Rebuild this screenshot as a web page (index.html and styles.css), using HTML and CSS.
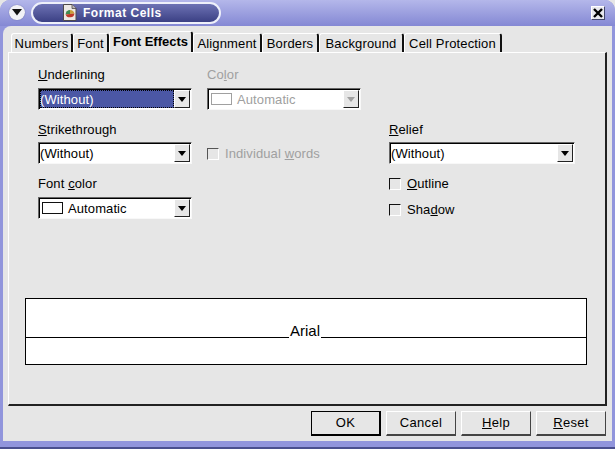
FILE: index.html
```html
<!DOCTYPE html>
<html lang="en">
<head>
    <meta charset="UTF-8">
    <title>Format Cells</title>
    <link rel="stylesheet" href="styles.css">
</head>
<body>
    <div class="window">
        <div class="titlebar">
            <div class="menu-btn">
                <svg width="10" height="7" viewBox="0 0 10 7"><path d="M0 0H10L5 6.5Z" fill="#111"/></svg>
            </div>
            <div class="title-pill">
                <svg class="doc-icon" width="15" height="17" viewBox="0 0 15 17">
                    <path d="M1.5 0.5H10L14 4.5V16.5H1.5Z" fill="#ece8e4" stroke="#4e4a4a"/>
                    <path d="M10 0.5V4.5H14" fill="#bdb8b4" stroke="#4e4a4a" stroke-width="0.8"/>
                    <path d="M8 10L8 6A4.5 4.5 0 0 0 3.6 10.5Z" fill="#3f8a4e"/>
                    <path d="M8 10L8 6A4.5 4.5 0 0 1 12.4 9.5Z" fill="#c9a03a"/>
                    <path d="M8 10L12.4 9.5A4.5 4 0 0 1 3.6 10.5Z" fill="#bf3a2a"/>
                </svg>
                <span>Format Cells</span>
            </div>
            <div class="close-btn">
                <svg width="10" height="10" viewBox="0 0 10 10"><path d="M1 1L9 9M9 1L1 9" stroke="#000" stroke-width="2.4"/></svg>
            </div>
        </div>
        <div class="client">
            <div class="tabs">
                <div class="tab tab-numbers">Numbers</div>
                <div class="tab tab-font">Font</div>
                <div class="tab tab-active">Font Effects</div>
                <div class="tab tab-alignment">Alignment</div>
                <div class="tab tab-borders">Borders</div>
                <div class="tab tab-background">Background</div>
                <div class="tab tab-protection">Cell Protection</div>
            </div>
            <div class="page">
                <div class="form-grid">
                    <div class="field">
                        <label class="lbl"><u>U</u>nderlining</label>
                        <div class="combo">
                            <div class="combo-text selected">(Without)</div>
                            <div class="arrow"><i></i></div>
                        </div>
                    </div>
                    <div class="field disabled">
                        <label class="lbl">Co<u>l</u>or</label>
                        <div class="combo">
                            <div class="combo-text"><span class="swatch"></span>Automatic</div>
                            <div class="arrow"><i></i></div>
                        </div>
                    </div>
                    <div></div>

                    <div class="field">
                        <label class="lbl lbl-tight"><u>S</u>trikethrough</label>
                        <div class="combo">
                            <div class="combo-text">(Without)</div>
                            <div class="arrow"><i></i></div>
                        </div>
                    </div>
                    <div class="field disabled check-cell">
                        <div class="check"><span class="box"></span><span>Individual <u>w</u>ords</span></div>
                    </div>
                    <div class="field">
                        <label class="lbl lbl-tight"><u>R</u>elief</label>
                        <div class="combo">
                            <div class="combo-text">(Without)</div>
                            <div class="arrow"><i></i></div>
                        </div>
                    </div>

                    <div class="field">
                        <label class="lbl">Font <u>c</u>olor</label>
                        <div class="combo">
                            <div class="combo-text"><span class="swatch"></span>Automatic</div>
                            <div class="arrow"><i></i></div>
                        </div>
                    </div>
                    <div></div>
                    <div class="checks">
                        <div class="check"><span class="box"></span><span><u>O</u>utline</span></div>
                        <div class="check"><span class="box"></span><span>Sha<u>d</u>ow</span></div>
                    </div>
                </div>
                <div class="preview">
                    <div class="preview-line"></div>
                    <span class="preview-text">Arial</span>
                </div>
            </div>
            <div class="buttons">
                <div class="btn btn-default">OK</div>
                <div class="btn">Cancel</div>
                <div class="btn"><span><u>H</u>elp</span></div>
                <div class="btn"><span><u>R</u>eset</span></div>
            </div>
        </div>
    </div>
</body>
</html>
```

FILE: styles.css
```css
html, body { margin: 0; padding: 0; }
body {
    width: 615px;
    height: 449px;
    overflow: hidden;
    font-family: "Liberation Sans", Arial, sans-serif;
    font-size: 13px;
    letter-spacing: 0.1px;
    color: #000;
    background: #e6e6e6;
}

.window {
    height: 449px;
    box-sizing: border-box;
    padding: 0 3px 6px 3px;
    background: #9195dc;
    border-bottom: 2px solid #4a4f8e;
    border-radius: 10px 10px 0 0;
    display: flex;
    flex-direction: column;
}

.titlebar {
    height: 26px;
    margin: 0 -3px;
    padding: 0 10px 1px 9px;
    box-sizing: border-box;
    display: flex;
    align-items: center;
    background: linear-gradient(#b4b7ea, #8488d4);
    border-radius: 10px 10px 0 0;
}
.menu-btn {
    width: 16px;
    height: 15px;
    margin-right: 6px;
    border-radius: 8px;
    background: #f2f2f6;
    box-shadow: 0 0 1px #4a4f8e;
    display: flex;
    align-items: center;
    justify-content: center;
}
.title-pill {
    width: 190px;
    height: 22px;
    padding-left: 29px;
    box-sizing: border-box;
    border: 2px solid #eef0fa;
    border-radius: 12px;
    background: linear-gradient(#6d72b4, #3b4084);
    color: #fff;
    font-weight: bold;
    font-size: 12px;
    letter-spacing: 0.5px;
    display: flex;
    align-items: center;
    gap: 6px;
}
.close-btn {
    width: 14px;
    height: 14px;
    margin-left: auto;
    background: #e8e8ee;
    border: 1px solid #5a5e9c;
    border-color: #fff #44486f #44486f #fff;
    box-sizing: border-box;
    display: flex;
    align-items: center;
    justify-content: center;
}

.client {
    flex: 1;
    background: #e6e6e6;
    padding: 7px 5px 0 5px;
    display: flex;
    flex-direction: column;
    border-radius: 8px 0 0 0;
}

.tabs {
    display: flex;
    height: 19px;
    padding-left: 3px;
}
.tab {
    box-sizing: border-box;
    height: 19px;
    padding-top: 2px;
    text-align: center;
    line-height: 15px;
    letter-spacing: 0.15px;
    border-top: 1px solid #fff;
    border-left: 1px solid #fff;
    border-right: 2px solid #111;
    border-radius: 3px 3px 0 0;
    white-space: nowrap;
}
.tab-numbers { width: 62px; }
.tab-font { width: 36px; }
.tab-active {
    width: 84px;
    font-weight: bold;
    letter-spacing: 0;
    margin-top: -2px;
    height: 21px;
    background: #e6e6e6;
    position: relative;
    z-index: 1;
}
.tab-alignment { width: 69px; }
.tab-borders { width: 57px; }
.tab-background { width: 85px; }
.tab-protection { width: 98px; }

.page {
    height: 354px;
    box-sizing: border-box;
    width: 599px;
    border-top: 1px solid #fff;
    border-left: 1px solid #fff;
    border-right: 2px solid #222;
    border-bottom: 2px solid #222;
    padding: 14px 0 0 29px;
}

.form-grid {
    display: grid;
    grid-template-columns: 154px 154px 199px;
    column-gap: 15px;
    grid-template-rows: 55px 54px 55px;
}
.form-grid > :nth-child(3n) { margin-left: 13px; }

.lbl {
    display: block;
    line-height: 15px;
    margin-bottom: 6px;
}
.lbl-tight { margin-bottom: 5px; }

.combo {
    height: 22px;
    box-sizing: border-box;
    display: flex;
    background: #fff;
    border: 1px solid #f8f8f8;
    border-top-color: #666;
    border-left-color: #666;
    padding: 1px 1px 1px 1px;
    box-shadow: inset 1px 1px 0 #000;
}
.combo-text {
    flex: 1;
    display: flex;
    align-items: center;
    line-height: 15px;
}
.combo-text.selected {
    background: #4b57a5;
    color: #fff;
    outline: 1px dotted #000;
    outline-offset: -1px;
}
.swatch {
    width: 21px;
    height: 12px;
    margin: 0 5px 0 2px;
    box-sizing: border-box;
    border: 1px solid #111;
    background: #fff;
    flex: none;
}
.arrow {
    width: 16px;
    background: #e6e6e6;
    border-top: 1px solid #fff;
    border-left: 1px solid #fff;
    border-right: 1px solid #222;
    border-bottom: 1px solid #222;
    box-sizing: border-box;
    display: flex;
    align-items: center;
    justify-content: center;
}
.arrow i {
    width: 0;
    height: 0;
    border-left: 4px solid transparent;
    border-right: 4px solid transparent;
    border-top: 5px solid #000;
}

.disabled { color: #a0a0a0; }
.disabled .swatch { border-color: #a0a0a0; }
.disabled .arrow i { border-top-color: #a0a0a0; }
.disabled .box { border-color: #555 #fff #fff #555; }

.check-cell { padding-top: 24px; }
.check {
    display: flex;
    align-items: center;
    line-height: 15px;
}
.box {
    width: 12px;
    height: 12px;
    margin-right: 6px;
    box-sizing: border-box;
    border: 1px solid #111;
    border-right-color: #fff;
    border-bottom-color: #fff;
    flex: none;
}
.checks {
    display: flex;
    flex-direction: column;
    gap: 11px;
}

.preview {
    width: 562px;
    height: 67px;
    margin: 67px 0 0 -13px;
    box-sizing: border-box;
    background: #fff;
    border: 1px solid #000;
    position: relative;
}
.preview-line {
    margin-top: 38px;
    border-top: 1px solid #000;
}
.preview-text {
    position: absolute;
    left: 263px;
    top: 25px;
    padding: 0 1px;
    background: #fff;
    font-size: 15px;
    letter-spacing: 0;
    line-height: 14px;
    height: 14px;
}

.buttons {
    display: flex;
    justify-content: flex-end;
    gap: 5px;
    margin-top: 5px;
    padding-right: 1px;
}
.btn {
    width: 70px;
    height: 25px;
    box-sizing: border-box;
    padding-bottom: 2px;
    display: flex;
    align-items: center;
    justify-content: center;
    border-top: 1px solid #fff;
    border-left: 1px solid #fff;
    border-right: 1px solid #444;
    border-bottom: 2px solid #444;
    letter-spacing: 0.3px;
}
.btn-default {
    border: 1px solid #000;
    border-bottom-width: 2px;
    border-right-width: 2px;
}
```
